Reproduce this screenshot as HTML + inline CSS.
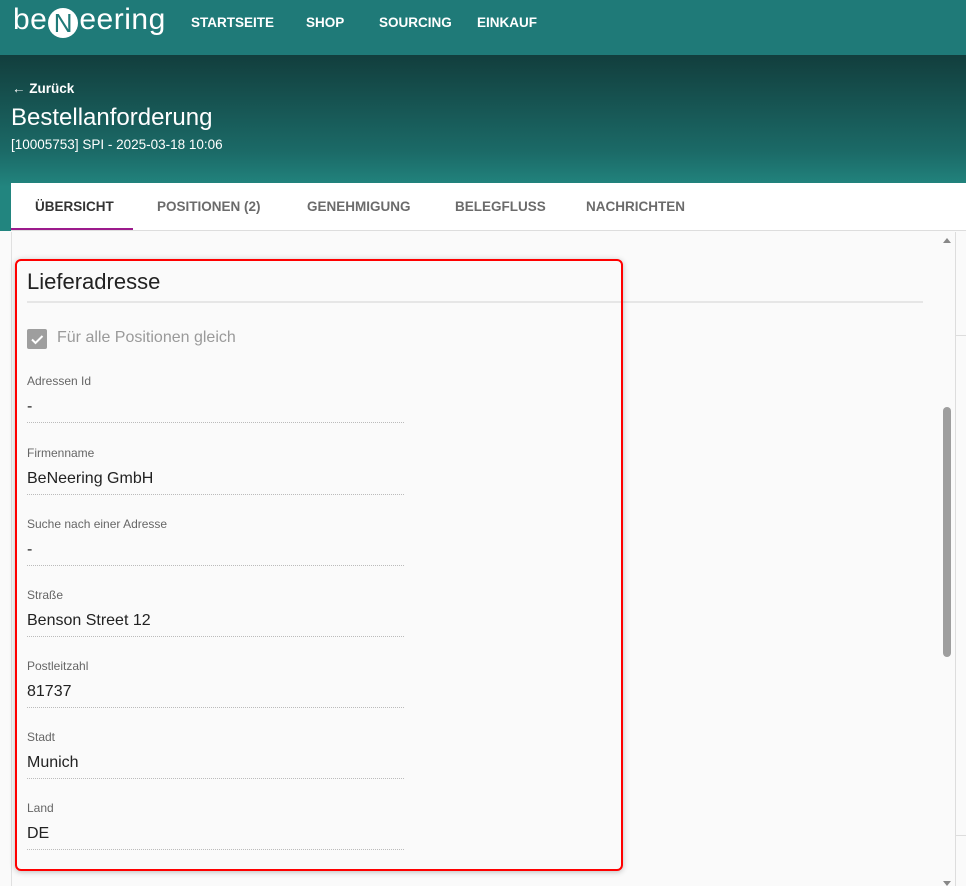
<!DOCTYPE html>
<html><head><style>
*{margin:0;padding:0;box-sizing:border-box}
body{width:966px;height:886px;overflow:hidden;font-family:"Liberation Sans",Roboto,sans-serif;background:#fafafa;position:relative}
.top{position:absolute;left:0;top:0;width:966px;height:55px;background:#1f7a78}
.logo{position:absolute;left:13px;top:3px;color:#fff;font-size:30px;letter-spacing:0.5px}
.logo .n{display:inline-block;width:30px;height:30px;border-radius:50%;background:#fff;color:#1f7a78;text-align:center;line-height:30px;font-size:26px;vertical-align:-3px;margin:0 1px}
.nav{position:absolute;top:15px;color:#fff;font-weight:bold;font-size:13.5px}
.hero{position:absolute;left:0;top:55px;width:966px;height:176px;background:linear-gradient(#123e3d,#1b6a67 55%,#22857f 75%,#22857f)}
.back{position:absolute;left:12px;top:81px;color:#fff;font-weight:bold;font-size:13.5px}
.h1{position:absolute;left:11px;top:104px;color:#fff;font-size:24px}
.sub{position:absolute;left:11px;top:137px;color:#fff;font-size:13.5px}
.tabs{position:absolute;left:11px;top:183px;width:955px;height:48px;background:#fff;border-bottom:1px solid #ddd}
.tab{position:absolute;top:16px;font-size:13.5px;font-weight:bold;color:#6b6b6b}
.ind{position:absolute;left:0;top:45px;width:122px;height:2px;background:#9c1a8c}
.content{position:absolute;left:11px;top:232px;width:927px;height:654px;background:#fafafa;border-left:1px solid #e0e0e0}
.sb{position:absolute;left:938px;top:232px;width:17px;height:654px;background:#fafafa}
.thumb{position:absolute;left:943px;top:407px;width:8px;height:250px;background:#9e9e9e;border-radius:4px}
.right{position:absolute;left:955px;top:232px;width:11px;height:654px;border-left:1px solid #ddd;background:#fafafa}
.box{position:absolute;left:15px;top:259px;width:608px;height:612px;border:2px solid #f00;border-radius:6px;box-shadow:0 1px 6px rgba(0,0,0,.25)}
.lt{position:absolute;left:27px;top:269px;font-size:22px;color:#222}
.hr{position:absolute;left:27px;top:301px;width:896px;height:2px;background:#e6e6e6}
.cb{position:absolute;left:27px;top:329px;width:20px;height:20px;background:#9e9e9e;border-radius:2px}
.cbl{position:absolute;left:57px;top:329px;font-size:16px;color:#9a9a9a}
.f{position:absolute;left:27px;width:377px}
.f .l{font-size:12px;color:#666;height:20px}
.f .v{font-size:16px;color:#222;margin-top:4px;height:24px}
.f .d{border-bottom:1px dotted #bbb;margin-top:0}
</style></head><body>
<div class="top"></div>
<div class="logo">be<span class="n">N</span>eering</div>
<div class="nav" style="left:191px">STARTSEITE</div>
<div class="nav" style="left:306px">SHOP</div>
<div class="nav" style="left:379px">SOURCING</div>
<div class="nav" style="left:477px">EINKAUF</div>
<div class="hero"></div>
<div class="back">&#8592; Zurück</div>
<div class="h1">Bestellanforderung</div>
<div class="sub">[10005753] SPI - 2025-03-18 10:06</div>
<div class="tabs">
<div class="tab" style="left:24px;color:#333">ÜBERSICHT</div>
<div class="tab" style="left:146px">POSITIONEN (2)</div>
<div class="tab" style="left:296px">GENEHMIGUNG</div>
<div class="tab" style="left:444px">BELEGFLUSS</div>
<div class="tab" style="left:575px">NACHRICHTEN</div>
<div class="ind"></div>
</div>
<div class="content"></div>
<div class="sb"></div>
<div class="thumb"></div>
<div style="position:absolute;left:943px;top:238px;border:4px solid transparent;border-bottom:5px solid #888;border-top:0"></div>
<div style="position:absolute;left:943px;top:881px;border:4px solid transparent;border-top:5px solid #888;border-bottom:0"></div>
<div class="right"><div style="position:absolute;top:103px;width:11px;border-top:1px solid #ddd"></div><div style="position:absolute;top:603px;width:11px;border-top:1px solid #ddd"></div></div>
<div class="hr"></div>
<div class="box"></div>
<div class="lt">Lieferadresse</div>
<div class="cb"><svg width="20" height="20"><path d="M5 10.5l3.5 3.5 7-7" stroke="#fff" stroke-width="2" fill="none"/></svg></div>
<div class="cbl">Für alle Positionen gleich</div>
<div class="f" style="top:374px"><div class="l">Adressen Id</div><div class="v">-</div><div class="d"></div></div>
<div class="f" style="top:446px"><div class="l">Firmenname</div><div class="v">BeNeering GmbH</div><div class="d"></div></div>
<div class="f" style="top:517px"><div class="l">Suche nach einer Adresse</div><div class="v">-</div><div class="d"></div></div>
<div class="f" style="top:588px"><div class="l">Straße</div><div class="v">Benson Street 12</div><div class="d"></div></div>
<div class="f" style="top:659px"><div class="l">Postleitzahl</div><div class="v">81737</div><div class="d"></div></div>
<div class="f" style="top:730px"><div class="l">Stadt</div><div class="v">Munich</div><div class="d"></div></div>
<div class="f" style="top:801px"><div class="l">Land</div><div class="v">DE</div><div class="d"></div></div>
</body></html>
